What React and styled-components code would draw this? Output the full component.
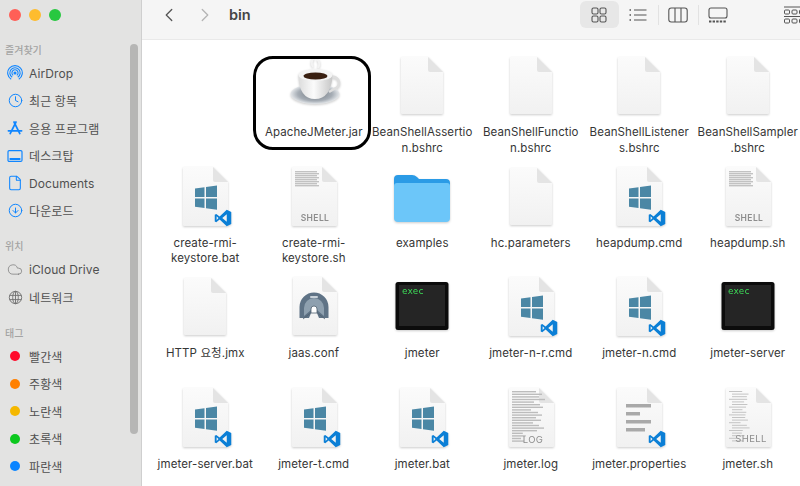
import React from "react";
import styled, { createGlobalStyle } from "styled-components";
import { Clock, File, ArrowDownCircle, Cloud, ChevronLeft, ChevronRight } from "lucide-react";

const GlobalStyle = createGlobalStyle`
  html, body {
    margin: 0;
    padding: 0;
    background: #fff;
  }
  body {
    font-family: Inter, "Noto Sans CJK KR", "Noto Sans", sans-serif;
  }
`;

const favourites = [
  { name: "AirDrop", icon: <AirDropIcon /> },
  { name: "최근 항목", icon: <Clock size={15} strokeWidth={1.6} /> },
  { name: "응용 프로그램", icon: <AppsIcon /> },
  { name: "데스크탑", icon: <DesktopIcon /> },
  { name: "Documents", icon: <File size={16} strokeWidth={1.6} /> },
  { name: "다운로드", icon: <ArrowDownCircle size={15} strokeWidth={1.6} /> },
];

const tags = [
  { name: "빨간색", color: "#ff0a2a" },
  { name: "주황색", color: "#ff8000" },
  { name: "노란색", color: "#f5b800" },
  { name: "초록색", color: "#0cc81e" },
  { name: "파란색", color: "#0a84ff" },
];

const files = [
  null,
  { kind: "cup", lines: ["ApacheJMeter.jar"], selected: true },
  { kind: "blank", lines: ["BeanShellAssertio", "n.bshrc"] },
  { kind: "blank", lines: ["BeanShellFunctio", "n.bshrc"] },
  { kind: "blank", lines: ["BeanShellListener", "s.bshrc"] },
  { kind: "blank", lines: ["BeanShellSampler", ".bshrc"] },
  { kind: "win", lines: ["create-rmi-", "keystore.bat"] },
  { kind: "shell", lines: ["create-rmi-", "keystore.sh"] },
  { kind: "folder", lines: ["examples"] },
  { kind: "blank", lines: ["hc.parameters"] },
  { kind: "win", lines: ["heapdump.cmd"] },
  { kind: "shell", lines: ["heapdump.sh"] },
  { kind: "blank", lines: ["HTTP 요청.jmx"] },
  { kind: "tunnel", lines: ["jaas.conf"] },
  { kind: "exec", lines: ["jmeter"] },
  { kind: "win", lines: ["jmeter-n-r.cmd"] },
  { kind: "win", lines: ["jmeter-n.cmd"] },
  { kind: "exec", lines: ["jmeter-server"] },
  { kind: "win", lines: ["jmeter-server.bat"] },
  { kind: "win", lines: ["jmeter-t.cmd"] },
  { kind: "win", lines: ["jmeter.bat"] },
  { kind: "log", lines: ["jmeter.log"] },
  { kind: "props", lines: ["jmeter.properties"] },
  { kind: "shlog", lines: ["jmeter.sh"] },
];

function AirDropIcon() {
  return (
    <svg width="16" height="16" viewBox="0 0 16 16" fill="none" stroke="currentColor" strokeWidth="1.1">
      <path d="M4.2 14.2a7.3 7.3 0 1 1 7.6 0" />
      <path d="M5.2 12.3a5.2 5.2 0 1 1 5.6 0" />
      <path d="M6.2 10.4a3.1 3.1 0 1 1 3.6 0" />
      <circle cx="8" cy="8" r="1" fill="currentColor" />
    </svg>
  );
}

function AppsIcon() {
  return (
    <svg width="16" height="16" viewBox="0 0 16 16" fill="none" stroke="currentColor" strokeWidth="1.7" strokeLinecap="round">
      <path d="M7 2 L12.8 13.6" />
      <path d="M9 2 L3.2 13.6" />
      <path d="M1.4 10.8 H14.6" />
    </svg>
  );
}

function DesktopIcon() {
  return (
    <svg width="16" height="14" viewBox="0 0 16 14" fill="none" stroke="currentColor" strokeWidth="1.2">
      <rect x="1" y="1.6" width="14" height="10.8" rx="1.2" />
      <rect x="2.6" y="9" width="10.8" height="2" fill="currentColor" stroke="none" />
    </svg>
  );
}

function NetworkIcon() {
  return (
    <svg width="15" height="15" viewBox="0 0 15 15" fill="none" stroke="#6f6f6f" strokeWidth="0.9">
      <circle cx="7.5" cy="7.5" r="6.2" />
      <ellipse cx="7.5" cy="7.5" rx="2.8" ry="6.2" />
      <path d="M1.6 5.4 H13.4 M1.6 9.6 H13.4 M7.5 1.3 V13.7" />
    </svg>
  );
}

function GridViewIcon() {
  return (
    <svg width="16" height="16" viewBox="0 0 16 16" fill="none" stroke="#555" strokeWidth="1.1">
      <rect x="1" y="1" width="6" height="6" rx="1.5" />
      <rect x="9" y="1" width="6" height="6" rx="1.5" />
      <rect x="1" y="9" width="6" height="6" rx="1.5" />
      <rect x="9" y="9" width="6" height="6" rx="1.5" />
    </svg>
  );
}

function ListViewIcon() {
  return (
    <svg width="18" height="14" viewBox="0 0 18 14" fill="none" stroke="#555" strokeWidth="1.1">
      <path d="M5 2 H17.5 M5 7 H17.5 M5 12 H17.5" />
      <path d="M0.5 2 H2 M0.5 7 H2 M0.5 12 H2" strokeWidth="1.4" />
    </svg>
  );
}

function ColumnViewIcon() {
  return (
    <svg width="20" height="16" viewBox="0 0 20 16" fill="none" stroke="#555" strokeWidth="1.1">
      <rect x="0.8" y="1" width="18.4" height="14" rx="2.5" />
      <path d="M7 1 V15 M13 1 V15" />
    </svg>
  );
}

function GalleryViewIcon() {
  return (
    <svg width="20" height="16" viewBox="0 0 20 16" fill="none" stroke="#555" strokeWidth="1.1">
      <rect x="1" y="1" width="18" height="10" rx="2" />
      <path d="M1 14.5 H19" strokeWidth="1.8" strokeDasharray="2.4 1.2" />
    </svg>
  );
}

function GroupViewIcon() {
  return (
    <svg width="24" height="18" viewBox="0 0 24 18" fill="none" stroke="#555" strokeWidth="1">
      <path d="M0 1 H24" />
      <rect x="0.5" y="4" width="5" height="4" rx="1" />
      <rect x="8" y="4" width="5" height="4" rx="1" />
      <rect x="15.5" y="4" width="5" height="4" rx="1" />
      <path d="M0 10.5 H24" />
      <rect x="0.5" y="13" width="5" height="4" rx="1" />
      <rect x="8" y="13" width="5" height="4" rx="1" />
      <rect x="15.5" y="13" width="5" height="4" rx="1" />
    </svg>
  );
}

// paper sheet with a folded corner, left/top/right/bottom in the 60x60 icon box
function Page({ l = 8, t = 0, r = 53, b = 59, fill = "url(#sheet)" }) {
  return (
    <>
      <path d={`M${l + 1} ${t} H${r - 15} L${r} ${t + 15} V${b - 1} Q${r} ${b} ${r - 1} ${b} H${l + 1} Q${l} ${b} ${l} ${b - 1} V${t + 1} Q${l} ${t} ${l + 1} ${t} Z`} fill={fill} />
      <path d={`M${r - 15} ${t} L${r} ${t + 15} H${r - 13} Q${r - 15} ${t + 15} ${r - 15} ${t + 13} Z`} fill="#e4e4e4" />
    </>
  );
}

function VsBadge({ x = 39, y = 42 }) {
  return (
    <svg x={x} y={y} width="18" height="18" viewBox="0 0 24 24">
      <path
        fillRule="evenodd"
        fill="#0b7fd6"
        d="M17 1 L23 4 V20 L17 23 L7.5 14 L3 17.5 L1 16.5 V7.5 L3 6.5 L7.5 10 Z M17 7 L11 12 L17 17 Z M3.5 9.5 V14.5 L6 12 Z"
      />
    </svg>
  );
}

const tinyRows = [24, 30, 27, 33, 22, 28, 31, 19, 26, 30, 24, 29, 21, 27, 32, 25, 18, 23, 15, 20];

function FileArt({ kind }) {
  if (kind === "folder") {
    return (
      <FileSvg viewBox="0 0 60 60">
        <path d="M2 12 Q2 8 6 8 H20 Q23 8 25 10 L27 12 H54 Q58 12 58 16 V24 H2 Z" fill="#2b9be6" />
        <path d="M2 19 Q2 16 5 16 H55 Q58 16 58 19 V51 Q58 55 54 55 H6 Q2 55 2 51 Z" fill="#6cc6f9" />
      </FileSvg>
    );
  }
  if (kind === "exec") {
    return (
      <FileSvg viewBox="0 0 60 60">
        <rect x="3.5" y="5" width="53" height="48" rx="2.5" fill="#0c0c0c" />
        <rect x="7" y="8" width="46" height="41" fill="#252525" />
        <Exec x="10" y="16.5">exec</Exec>
      </FileSvg>
    );
  }
  if (kind === "cup") {
    return (
      <FileSvg viewBox="0 0 60 60">
        <ellipse cx="31" cy="38" rx="24.5" ry="10" fill="url(#saucer)" />
        <path d="M48 21 a6 6 0 0 1 2 12 l-5 3" fill="none" stroke="#dedede" strokeWidth="2.6" />
        <path d="M14.5 19 Q15 43 31 43 Q47 43 48.5 19 Z" fill="url(#cup)" />
        <ellipse cx="31.5" cy="19" rx="17" ry="6" fill="#f4f4f4" />
        <ellipse cx="31.5" cy="20" rx="12" ry="3.6" fill="#3a2012" />
        <path d="M29 11 Q26 6 30 2 M34 12 Q37 7 33 3" stroke="#f3f3f3" strokeWidth="2" fill="none" />
      </FileSvg>
    );
  }
  return (
    <FileSvg viewBox="0 0 60 60">
      {kind === "blank" && <Page l={9} r={51} t={1} b={58} />}
      {kind === "win" && (
        <>
          <Page />
          <path d="M20 21.5 L29.5 20.3 V30 H20 Z M31 20 L42 18.6 V30 H31 Z M20 31.5 H29.5 V41 L20 39.8 Z M31 31.5 H42 V42.8 L31 41.3 Z" fill="#4b87a5" />
          <VsBadge />
        </>
      )}
      {kind === "props" && (
        <>
          <Page />
          <path d="M17 16 H42 V19.5 H17 Z M17 24 H31 V27.5 H17 Z M17 32 H42 V35.5 H17 Z M17 40 H36 V43.5 H17 Z" fill="#a9a9a9" />
          <VsBadge />
        </>
      )}
      {kind === "shell" && (
        <>
          <Page l={8} r={53} />
          {[4, 6, 8, 10, 12, 14, 16, 18].map((y) => (
            <rect key={y} x="11" y={y} width={y % 4 ? 24 : 22} height="1.4" fill="#c2c2c2" />
          ))}
          <Badge x="31" y="54">SHELL</Badge>
        </>
      )}
      {kind === "tunnel" && (
        <>
          <Page l={9} r={53} t={0} b={58} />
          <path d="M15.5 41 V30 A14.5 14.5 0 0 1 44.5 30 V41 H35 L32.5 35 H27.5 L25 41 Z" fill="#5f7386" />
          <path d="M20 39 V31 A10 10 0 0 1 40 31 V39 L33 33 H27 Z" fill="#8ea0af" />
          <path d="M27 36 V32 A3 3 0 0 1 33 32 V36 Z" fill="#fff" stroke="#4f5f6e" strokeWidth="0.8" />
          <path d="M26.5 36 L19 42 M33.5 36 L41 42" stroke="#4f5f6e" strokeWidth="0.8" />
          <rect x="26" y="19" width="8" height="2" rx="1" fill="#c9d2da" />
        </>
      )}
      {kind === "log" && (
        <>
          <Page l={8} r={53} />
          {tinyRows.map((w, i) => (
            <rect key={i} x="11" y={3 + i * 2.6} width={i > 15 ? w * 0.6 : w} height="1.4" fill="#bcbcbc" />
          ))}
          <Badge x="32" y="55" $thin>LOG</Badge>
        </>
      )}
      {kind === "shlog" && (
        <>
          <Page l={8} r={53} />
          {tinyRows.map((w, i) => (
            <rect key={i} x={i % 3 ? 14 : 11} y={3 + i * 2.6} width={w * 0.55} height="1" fill="#c4c4c4" />
          ))}
          <Badge x="33" y="54" $thin>SHELL</Badge>
        </>
      )}
    </FileSvg>
  );
}

const App = () => {
  return (
    <Window>
      <GlobalStyle />
      <svg width="0" height="0" style={{ position: "absolute" }}>
        <defs>
          <linearGradient id="sheet" x1="0" y1="0" x2="0" y2="1">
            <stop offset="0" stopColor="#fbfbfb" />
            <stop offset="1" stopColor="#f1f1f1" />
          </linearGradient>
          <linearGradient id="cup" x1="0" y1="0" x2="1" y2="0">
            <stop offset="0" stopColor="#dcdcdc" />
            <stop offset="0.45" stopColor="#fbfbfb" />
            <stop offset="1" stopColor="#c6c6c6" />
          </linearGradient>
          <radialGradient id="saucer">
            <stop offset="0" stopColor="#70777f" />
            <stop offset="0.7" stopColor="#a6adb5" />
            <stop offset="1" stopColor="#e4e7ea" />
          </radialGradient>
        </defs>
      </svg>
      <Sidebar>
        <TrafficLights>
          <Light $color="#ff5f57" />
          <Light $color="#febc2e" />
          <Light $color="#28c840" />
        </TrafficLights>
        <SectionTitle>즐겨찾기</SectionTitle>
        {favourites.map((item) => (
          <SideItem key={item.name}>
            <SideIcon>{item.icon}</SideIcon>
            {item.name}
          </SideItem>
        ))}
        <SectionTitle $gap>위치</SectionTitle>
        <SideItem>
          <SideIcon $grey>
            <Cloud size={17} strokeWidth={1} />
          </SideIcon>
          iCloud Drive
        </SideItem>
        <SideItem>
          <SideIcon $grey>
            <NetworkIcon />
          </SideIcon>
          네트워크
        </SideItem>
        <SectionTitle $gap>태그</SectionTitle>
        {tags.map((tag) => (
          <SideItem key={tag.name}>
            <SideIcon>
              <TagDot $color={tag.color} />
            </SideIcon>
            {tag.name}
          </SideItem>
        ))}
        <ScrollThumb />
      </Sidebar>
      <Main>
        <Toolbar>
          <NavGroup>
            <ChevronLeft size={22} strokeWidth={1.4} color="#555" />
            <ChevronRight size={22} strokeWidth={1.4} color="#b4b4b4" />
          </NavGroup>
          <FolderTitle>bin</FolderTitle>
          <ViewGroup>
            <ViewButton $active>
              <GridViewIcon />
            </ViewButton>
            <ViewButton>
              <ListViewIcon />
            </ViewButton>
            <ViewDivider />
            <ViewButton>
              <ColumnViewIcon />
            </ViewButton>
            <ViewDivider />
            <ViewButton>
              <GalleryViewIcon />
            </ViewButton>
            <GroupButton>
              <GroupViewIcon />
            </GroupButton>
          </ViewGroup>
        </Toolbar>
        <FileGrid>
          {files.map((file, i) =>
            file ? (
              <FileCell key={i} $selected={file.selected}>
                <FileArt kind={file.kind} />
                <FileLabel>
                  {file.lines.map((line) => (
                    <LabelLine key={line}>{line}</LabelLine>
                  ))}
                </FileLabel>
              </FileCell>
            ) : (
              <div key={i} />
            )
          )}
        </FileGrid>
      </Main>
    </Window>
  );
};

export default App;

const Window = styled.div`
  display: flex;
  width: 800px;
  height: 486px;
  overflow: hidden;
  background: #fff;
`;

const Sidebar = styled.aside`
  position: relative;
  box-sizing: border-box;
  flex: 0 0 142px;
  border-right: 1px solid #cfcfcf;
  background: #e3e3e2;
  overflow: hidden;
`;

const TrafficLights = styled.div`
  display: flex;
  gap: 8px;
  padding: 9px 0 0 9px;
  height: 42.5px;
  box-sizing: border-box;
`;

const Light = styled.span`
  width: 12px;
  height: 12px;
  border-radius: 50%;
  background: ${(p) => p.$color};
`;

const SectionTitle = styled.div`
  height: 15px;
  margin-top: ${(p) => (p.$gap ? "14.5px" : "0")};
  margin-bottom: 2px;
  padding-left: 5px;
  font-size: 10px;
  line-height: 15px;
  font-weight: 500;
  color: #a3a3a3;
`;

const SideItem = styled.div`
  display: flex;
  align-items: center;
  height: 27.5px;
  padding-left: 7px;
  font-size: 12px;
  letter-spacing: 0.1px;
  color: #505050;
  white-space: nowrap;
`;

const SideIcon = styled.span`
  display: flex;
  align-items: center;
  justify-content: center;
  width: 16px;
  height: 16px;
  margin-right: 6px;
  color: ${(p) => (p.$grey ? "#6f6f6f" : "#1086ff")};
`;

const TagDot = styled.span`
  width: 10px;
  height: 10px;
  border-radius: 50%;
  background: ${(p) => p.$color};
`;

const ScrollThumb = styled.div`
  position: absolute;
  top: 44px;
  left: 130px;
  width: 8px;
  height: 390px;
  border-radius: 4px;
  background: #b6b6b5;
`;

const Main = styled.main`
  flex: 1;
  min-width: 0;
  display: flex;
  flex-direction: column;
`;

const Toolbar = styled.header`
  box-sizing: border-box;
  display: flex;
  align-items: flex-start;
  height: 41px;
  padding-top: 1px;
  background: #f5f5f5;
  border-bottom: 1px solid #e9e9e9;
`;

const NavGroup = styled.div`
  display: flex;
  gap: 14px;
  padding: 3px 0 0 16px;
`;

const FolderTitle = styled.h1`
  margin: 0 0 0 13px;
  padding-top: 4px;
  font-size: 14.5px;
  line-height: 20px;
  font-weight: 600;
  color: #454545;
`;

const ViewGroup = styled.div`
  display: flex;
  align-items: center;
  height: 27px;
  margin-left: 329px;
`;

const ViewButton = styled.div`
  display: flex;
  align-items: center;
  justify-content: center;
  width: 39px;
  height: 27px;
  border-radius: 6px;
  background: ${(p) => (p.$active ? "#e7e7e7" : "transparent")};
`;

const ViewDivider = styled.span`
  width: 1px;
  height: 20px;
  background: #e2e2e2;
`;

const GroupButton = styled.div`
  display: flex;
  margin-left: 46px;
`;

const FileGrid = styled.section`
  display: grid;
  grid-template-columns: repeat(6, 108.5px);
  grid-auto-rows: 110.5px;
  padding: 15px 0 0 9px;
  overflow: hidden;
`;

const FileCell = styled.article`
  position: relative;
  display: flex;
  flex-direction: column;
  align-items: center;
  padding-top: 1px;

  ${(p) =>
    p.$selected &&
    `
    &::after {
      content: "";
      position: absolute;
      top: 1px;
      left: -6.5px;
      right: -3px;
      height: 94px;
      box-sizing: border-box;
      border: 3px solid #000;
      border-radius: 20px;
    }
  `}
`;

const FileSvg = styled.svg`
  flex: none;
  width: 60px;
  height: 60px;
  filter: drop-shadow(0 1px 1px rgba(0, 0, 0, 0.2));
`;

const FileLabel = styled.div`
  margin-top: 9px;
  font-size: 11.5px;
  line-height: 15.5px;
  letter-spacing: 0.1px;
  color: #363636;
  text-align: center;
`;

const LabelLine = styled.div`
  white-space: nowrap;
`;

const Badge = styled.text`
  font-family: Inter, sans-serif;
  font-size: ${(p) => (p.$thin ? "9.5px" : "8.5px")};
  font-weight: ${(p) => (p.$thin ? 400 : 600)};
  letter-spacing: 0.4px;
  fill: #8d8d8d;
  text-anchor: middle;
`;

const Exec = styled.text`
  font-family: "DejaVu Sans Mono", monospace;
  font-size: 9px;
  fill: #3ddc58;
`;
